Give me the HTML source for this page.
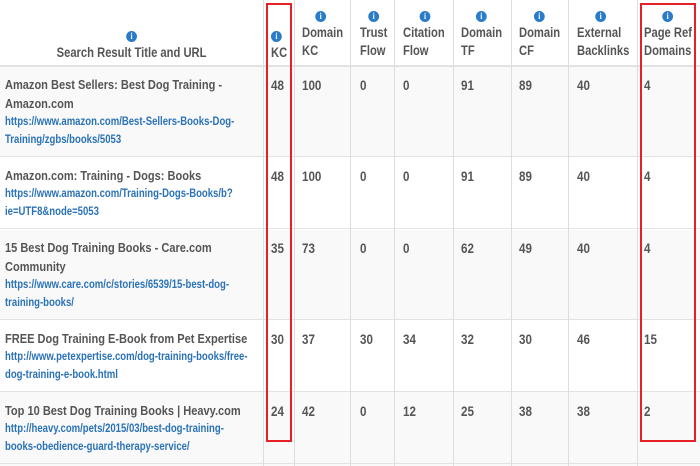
<!DOCTYPE html>
<html><head><style>
body{margin:0;width:700px;height:466px;background:#fff;overflow:hidden;position:relative;font-family:"Liberation Sans",sans-serif;color:#555;font-weight:bold}
.v{position:absolute;top:0;width:1px;height:466px;background:#ddd}
.h{position:absolute;left:0;width:700px;height:2px;background:#e2e2e2}
.g{position:absolute;left:0;width:700px;background:#f9f9f9}
.hd,.n,.t{transform:scaleX(.83);transform-origin:0 0}
.hd{position:absolute;font-size:13.5px;line-height:18px;text-align:left;white-space:nowrap}
.i{display:inline-block;width:13px;height:11px;border-radius:50%;background:#2a7bc8;color:#fff;font:bold 9px/11px "Liberation Serif",serif;text-align:center}
.t{position:absolute;left:5px;font-size:13.3px;line-height:19px;width:305px}
.t a{display:block;color:#2a72b8;font-size:11.5px;line-height:18px;text-decoration:none;width:293px}
.n{position:absolute;font-size:14px}
.r{position:absolute;border:2px solid #e52027}
</style></head><body>
<div class="g" style="top:67px;height:90px"></div>
<div class="g" style="top:230px;height:90px"></div>
<div class="g" style="top:392px;height:74px"></div>
<div class="h" style="top:65px"></div>
<div class="h" style="top:156px;height:1px"></div>
<div class="h" style="top:228px;height:1px"></div>
<div class="h" style="top:319px;height:1px"></div>
<div class="h" style="top:391px;height:1px"></div>
<div class="h" style="top:463px;height:1px"></div>
<div class="v" style="left:263px"></div><div class="v" style="left:294px"></div><div class="v" style="left:350px"></div><div class="v" style="left:394px"></div><div class="v" style="left:453px"></div><div class="v" style="left:511px"></div><div class="v" style="left:568px"></div><div class="v" style="left:637px"></div>

<div class="hd" style="left:0;width:317px;top:26px;text-align:center"><span class="i">i</span><br>Search Result Title and URL</div>
<div class="hd" style="left:271px;top:26px"><span class="i">i</span><br>KC</div>
<div class="hd" style="left:302px;top:6px"><span class="i" style="margin-left:16px">i</span><br>Domain<br>KC</div>
<div class="hd" style="left:360px;top:6px"><span class="i" style="margin-left:10px">i</span><br>Trust<br>Flow</div>
<div class="hd" style="left:403px;top:6px"><span class="i" style="margin-left:20px">i</span><br>Citation<br>Flow</div>
<div class="hd" style="left:461px;top:6px"><span class="i" style="margin-left:18px">i</span><br>Domain<br>TF</div>
<div class="hd" style="left:519px;top:6px"><span class="i" style="margin-left:18px">i</span><br>Domain<br>CF</div>
<div class="hd" style="left:577px;top:6px"><span class="i" style="margin-left:22px">i</span><br>External<br>Backlinks</div>
<div class="hd" style="left:644px;top:6px"><span class="i" style="margin-left:22px">i</span><br>Page Ref<br>Domains</div>

<div class="t" style="top:75px">Amazon Best Sellers: Best Dog Training - Amazon.com<a>https://www.amazon.com/Best-Sellers-Books-Dog-Training/zgbs/books/5053</a></div>
<div class="t" style="top:166px">Amazon.com: Training - Dogs: Books<a>https://www.amazon.com/Training-Dogs-Books/b?ie=UTF8&amp;node=5053</a></div>
<div class="t" style="top:238px">15 Best Dog Training Books - Care.com Community<a>https://www.care.com/c/stories/6539/15-best-dog-training-books/</a></div>
<div class="t" style="top:329px">FREE Dog Training E-Book from Pet Expertise<a>http://www.petexpertise.com/dog-training-books/free-dog-training-e-book.html</a></div>
<div class="t" style="top:401px">Top 10 Best Dog Training Books | Heavy.com<a>http://heavy.com/pets/2015/03/best-dog-training-books-obedience-guard-therapy-service/</a></div>

<div class="n" style="left:271px;top:77px">48</div><div class="n" style="left:302px;top:77px">100</div><div class="n" style="left:360px;top:77px">0</div><div class="n" style="left:403px;top:77px">0</div><div class="n" style="left:461px;top:77px">91</div><div class="n" style="left:519px;top:77px">89</div><div class="n" style="left:577px;top:77px">40</div><div class="n" style="left:644px;top:77px">4</div>
<div class="n" style="left:271px;top:168px">48</div><div class="n" style="left:302px;top:168px">100</div><div class="n" style="left:360px;top:168px">0</div><div class="n" style="left:403px;top:168px">0</div><div class="n" style="left:461px;top:168px">91</div><div class="n" style="left:519px;top:168px">89</div><div class="n" style="left:577px;top:168px">40</div><div class="n" style="left:644px;top:168px">4</div>
<div class="n" style="left:271px;top:240px">35</div><div class="n" style="left:302px;top:240px">73</div><div class="n" style="left:360px;top:240px">0</div><div class="n" style="left:403px;top:240px">0</div><div class="n" style="left:461px;top:240px">62</div><div class="n" style="left:519px;top:240px">49</div><div class="n" style="left:577px;top:240px">40</div><div class="n" style="left:644px;top:240px">4</div>
<div class="n" style="left:271px;top:331px">30</div><div class="n" style="left:302px;top:331px">37</div><div class="n" style="left:360px;top:331px">30</div><div class="n" style="left:403px;top:331px">34</div><div class="n" style="left:461px;top:331px">32</div><div class="n" style="left:519px;top:331px">30</div><div class="n" style="left:577px;top:331px">46</div><div class="n" style="left:644px;top:331px">15</div>
<div class="n" style="left:271px;top:403px">24</div><div class="n" style="left:302px;top:403px">42</div><div class="n" style="left:360px;top:403px">0</div><div class="n" style="left:403px;top:403px">12</div><div class="n" style="left:461px;top:403px">25</div><div class="n" style="left:519px;top:403px">38</div><div class="n" style="left:577px;top:403px">38</div><div class="n" style="left:644px;top:403px">2</div>

<div class="r" style="left:266px;top:3px;width:22px;height:435px"></div>
<div class="r" style="left:640px;top:3px;width:52px;height:435px"></div>
</body></html>
